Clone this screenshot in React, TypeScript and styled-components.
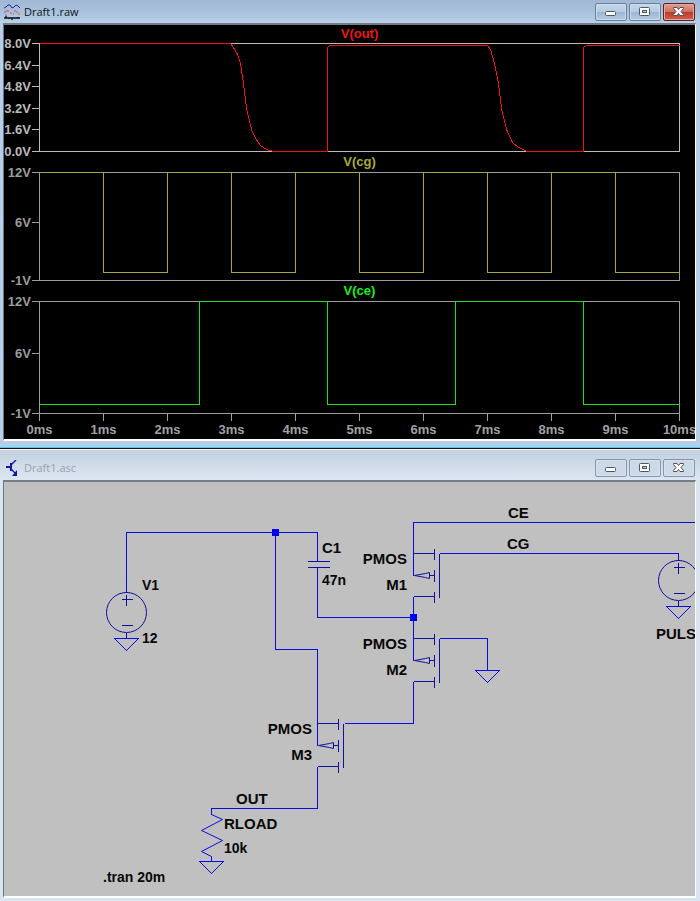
import React from "react";
import styled, { createGlobalStyle, css } from "styled-components";

const GlobalStyle = createGlobalStyle`
  * { box-sizing: border-box; }
  body { margin: 0; background: #dbe6f2; }
`;

const Desktop = styled.main`
  display: flex;
  flex-direction: column;
  min-height: 100vh;
`;

const WindowFrame = styled.section<{ $active: boolean }>`
  display: flex;
  flex-direction: column;
  padding: 0 4px ${(p) => (p.$active ? 6 : 3)}px 3px;
  ${(p) =>
    p.$active
      ? css`
          background: #b7cee8;
          border-bottom: 1px solid #45d0ea;
          box-shadow: 0 1px 0 #101418;
          margin-bottom: 1px;
        `
      : css`
          background: #d9e5f1;
          border-top: 1px solid #f4f8fc;
          flex: 1;
        `}
`;

const TitleBar = styled.header<{ $active: boolean }>`
  display: flex;
  align-items: center;
  gap: 4px;
  height: ${(p) => (p.$active ? 23 : 30)}px;
  padding-top: ${(p) => (p.$active ? 0 : 6)}px;
  margin: 0 -4px 0 -3px;
  padding-left: 4px;
  padding-right: 5px;
  background: ${(p) =>
    p.$active
      ? "linear-gradient(#a0b8d5, #a9c1dc 50%, #b9d2ea)"
      : "linear-gradient(#c2d0df, #cedbe8 45%, #dce6f1)"};
`;

const Title = styled.h1<{ $active: boolean }>`
  flex: 1;
  margin: 0;
  font: 400 11px/16px "Open Sans", "Noto Sans", sans-serif;
  color: ${(p) => (p.$active ? "#0c1420" : "#98a1ab")};
`;

const Controls = styled.div`
  display: flex;
  gap: 2px;
`;

const ControlButton = styled.button<{ $tone: "active" | "inactive" | "close" }>`
  display: flex;
  align-items: center;
  justify-content: center;
  width: 32px;
  height: 18px;
  padding: 0;
  border-radius: 2px;
  ${(p) =>
    p.$tone === "close"
      ? css`
          border: 1px solid #5b2029;
          background: linear-gradient(#dfa090, #d0705e 48%, #bb3b2a 52%, #cf6350);
          box-shadow: inset 0 0 0 1px #e2a99c;
        `
      : p.$tone === "active"
      ? css`
          border: 1px solid #6a7f99;
          background: linear-gradient(#c6d7ea, #b6cbe2 48%, #9db7d3 52%, #b2c9e2);
          box-shadow: inset 0 0 0 1px #c9dbee;
        `
      : css`
          border: 1px solid #8496ab;
          background: #ccd9e6;
          box-shadow: inset 0 0 0 1px #d6e1ed;
        `}
`;

const Pane = styled.div<{ $dark?: boolean }>`
  overflow: hidden;
  flex: 1;
  border: solid;
  border-width: 2px 1px 2px 1px;
  border-color: #747c85 #ffffff #ffffff #6d7680;
  background: ${(p) => (p.$dark ? "#000" : "#c0c0c0")};
`;

const ChartBlock = styled.div`
  display: grid;
  grid-template-columns: 35px 1fr;
  padding-right: 15px;
`;

const TraceName = styled.h2<{ $color: string; $first?: boolean }>`
  grid-column: 2;
  margin: 0;
  text-align: center;
  font: 700 13px/${(p) => (p.$first ? 18 : 20)}px "Liberation Sans", Arial, sans-serif;
  color: ${(p) => p.$color};
`;

const AxisSvg = styled.svg`
  display: block;
  overflow: visible;
  font: 700 13px "Liberation Sans", Arial, sans-serif;
`;

const PlotSvg = styled.svg`
  display: block;
  width: 100%;
  overflow: visible;
`;

const TimeScale = styled.div`
  display: flex;
  justify-content: space-between;
  height: 25px;
  margin: 0 15px 0 35px;
`;

const TimeMark = styled.span`
  display: flex;
  flex-direction: column;
  align-items: center;
  width: 1px;
  white-space: nowrap;
  font: 700 13px/16px "Liberation Sans", Arial, sans-serif;
  color: #a0a0a0;
  &::before {
    content: "";
    flex: none;
    width: 1px;
    height: 7px;
    margin-bottom: 1px;
    background: #a0a0a0;
  }
`;

type Tick = [string, number];
interface ChartProps {
  name: string;
  color: string;
  lineColor: string;
  axisColor: string;
  height: number;
  ticks: Tick[];
  path: string;
  first?: boolean;
}

function Chart({ name, color, lineColor, axisColor, height, ticks, path, first }: ChartProps) {
  const bottom = height - 1;
  return (
    <ChartBlock>
      <TraceName $color={color} $first={first}>{name}</TraceName>
      <AxisSvg width="35" height={height} fill={axisColor}>
        {ticks.map(([label, y]) => (
          <g key={label}>
            <text x="27" y={y + 5} textAnchor="end">{label}</text>
            <rect x="28" y={y} width="7" height="1" />
          </g>
        ))}
      </AxisSvg>
      <PlotSvg
        height={height}
        viewBox={`0 0 641 ${height}`}
        preserveAspectRatio="none"
        fill="none"
        shapeRendering="crispEdges"
      >
        <g transform="translate(.5 .5)">
          <path d={`M0 0H640V${bottom}H0Z`} stroke={axisColor} vectorEffect="non-scaling-stroke" />
          <path d={path} stroke={lineColor} vectorEffect="non-scaling-stroke" />
        </g>
      </PlotSvg>
    </ChartBlock>
  );
}

const charts: ChartProps[] = [
  {
    name: "V(out)",
    color: "#f01414",
    lineColor: "#f01018",
    axisColor: "#bababa",
    height: 109,
    first: true,
    ticks: [["8.0V", 0], ["6.4V", 22], ["4.8V", 43], ["3.2V", 65], ["1.6V", 86], ["0.0V", 108]],
    path:
      "M0 0H191L194 4L198 11L201 20L204 40L207 65L212 86L216 95L221 102L227 106L234 108H288V4L290 2H448L451 6L455 20L459 40L462 65L467 86L473 99L479 104L488 108H544V4L547 2H640",
  },
  {
    name: "V(cg)",
    color: "#acac2e",
    lineColor: "#a8a838",
    axisColor: "#9c9c9c",
    height: 109,
    ticks: [["12V", 0], ["6V", 50], ["-1V", 108]],
    path: "M0 0H64V100H128V0H192V100H256V0H320V100H384V0H448V100H512V0H576V100H640",
  },
  {
    name: "V(ce)",
    color: "#14f014",
    lineColor: "#20e020",
    axisColor: "#9c9c9c",
    height: 113,
    ticks: [["12V", 0], ["6V", 52], ["-1V", 112]],
    path: "M0 103H160V0H288V103H416V0H544V103H640",
  },
];

const WIRE = "#0a0ae6";
const SYMBOL = "#10109c";

const SchematicSvg = styled.svg`
  display: block;
  width: 100%;
  height: 414px;
`;

const PartText = styled.text<{ $small?: boolean }>`
  font: 700 ${(p) => (p.$small ? 14 : 15)}px "Liberation Sans", Arial, sans-serif;
  fill: #080808;
`;

const Ground = ({ x, y }: { x: number; y: number }) => (
  <path d={`M${x - 12} ${y}H${x + 12}L${x} ${y + 12}Z`} stroke={WIRE} />
);

const Junction = ({ x, y }: { x: number; y: number }) => (
  <rect x={x - 3.5} y={y - 3.5} width="7" height="7" fill="#0000ee" />
);

const VoltageSource = ({ x, y }: { x: number; y: number }) => (
  <g stroke={SYMBOL}>
    <circle cx={x} cy={y} r="20" shapeRendering="auto" />
    <path d={`M${x - 5} ${y - 13}h11M${x} ${y - 18}v11M${x - 5} ${y + 13}h11M${x} ${y + 20}v6`} />
    <Ground x={x} y={y + 26} />
  </g>
);

const Mosfet = ({ x, y }: { x: number; y: number }) => (
  <g transform={`translate(${x} ${y})`} stroke={SYMBOL}>
    <path d="M0 0H21M0 43H21M21 -5V6M21 16V28M21 38V49M26 0V44M16 22H21" />
    <path d="M1 22L12 20L16 19V25L12 24Z" shapeRendering="auto" />
  </g>
);

const labels: { t: string; x: number; y: number; end?: boolean; small?: boolean }[] = [
  { t: "CE", x: 504, y: 36 },
  { t: "CG", x: 503, y: 67 },
  { t: "C1", x: 318, y: 71 },
  { t: "47n", x: 318, y: 103, small: true },
  { t: "V1", x: 138, y: 108, small: true },
  { t: "12", x: 138, y: 161, small: true },
  { t: "PMOS", x: 403, y: 82, end: true },
  { t: "M1", x: 403, y: 108, end: true },
  { t: "PMOS", x: 403, y: 167, end: true },
  { t: "M2", x: 403, y: 193, end: true },
  { t: "PMOS", x: 308, y: 252, end: true },
  { t: "M3", x: 308, y: 278, end: true },
  { t: "OUT", x: 232, y: 322 },
  { t: "RLOAD", x: 220, y: 347 },
  { t: "10k", x: 220, y: 371, small: true },
  { t: ".tran 20m", x: 99, y: 400, small: true },
  { t: "PULS", x: 652, y: 157 },
];

function Schematic() {
  return (
    <SchematicSvg fill="none" shapeRendering="crispEdges" role="img" aria-label="Circuit schematic">
      <g transform="translate(.5 .5)">
        <path
          stroke={WIRE}
          d="M122 110V50H313V79M271 50V167H313V263M313 85V135H409M409 93V40H2000M435 71H674V78M409 114V178M435 156H483V188M409 199V241H340M313 284V326H207V332"
        />
        <path stroke={SYMBOL} d="M303 79H325M303 85H325" />
        <path
          stroke={WIRE}
          d="M207 332L218 337L197 348L218 358L197 369L207 374V379"
          shapeRendering="auto"
        />
        <VoltageSource x={122} y={130} />
        <VoltageSource x={674} y={98} />
        <Mosfet x={409} y={71} />
        <Mosfet x={409} y={156} />
        <Mosfet x={313} y={241} />
        <Ground x={483} y={188} />
        <Ground x={207} y={379} />
        <Junction x={271} y={50} />
        <Junction x={409} y={135} />
      </g>
      {labels.map((l) => (
        <PartText key={`${l.t}${l.y}`} x={l.x} y={l.y} $small={l.small} textAnchor={l.end ? "end" : "start"}>
          {l.t}
        </PartText>
      ))}
    </SchematicSvg>
  );
}

const WaveIcon = () => (
  <svg width="16" height="16" viewBox="0 0 16 16" fill="none" aria-hidden="true">
    <path d="M0 4L2 3L4 1L6 1L8 4L10 3L12 1L14 2L16 4" stroke="#28289c" />
    <path d="M0 8H2M2 7H5M6 9H8M10 7H12M12 8H14M14 10H16M1 11H3M9 10H10" stroke="#d84848" />
    <path d="M0 14H16M2 12V14M8 14V16M14 13V14M5 14V15" stroke="#101018" strokeWidth="1.400" />
  </svg>
);

const TransistorIcon = () => (
  <svg width="16" height="16" viewBox="0 0 16 16" fill="none" stroke="#1414a8" aria-hidden="true">
    <path d="M2 7H6" strokeWidth="2" />
    <path d="M7 3V11" strokeWidth="2" />
    <path d="M7 5L12 0M7 9L12 14" strokeWidth="1.400" />
    <path d="M13 10V16H8Z" fill="#1414a8" stroke="none" />
  </svg>
);

const MinGlyph = () => (
  <svg width="12" height="12" viewBox="0 0 12 12" aria-hidden="true">
    <rect x=".5" y="5.5" width="10" height="4" rx="1" fill="#fff" stroke="#4c5868" />
  </svg>
);

const MaxGlyph = () => (
  <svg width="12" height="12" viewBox="0 0 12 12" aria-hidden="true">
    <rect x=".5" y="1.5" width="10" height="8" rx="1" fill="#fff" stroke="#4c5868" />
    <rect x="3.5" y="4.5" width="4" height="2" fill="#b8cce2" stroke="#4c5868" />
  </svg>
);

const CloseGlyph = () => (
  <svg width="12" height="12" viewBox="0 0 12 12" aria-hidden="true">
    <path
      d="M.5 1.500H4L5.500 3.500L7 1.500H10.500V2.500L8 5.500L10.500 8.500V9.500H7L5.500 7.500L4 9.500H.5V8.500L3 5.500L.5 2.500Z"
      fill="#fff"
      stroke="#5a4a58"
    />
  </svg>
);

interface WindowProps {
  title: string;
  active: boolean;
  icon: React.ReactNode;
  dark?: boolean;
  children: React.ReactNode;
}

function Window({ title, active, icon, dark, children }: WindowProps) {
  const tone = active ? "active" : "inactive";
  return (
    <WindowFrame $active={active}>
      <TitleBar $active={active}>
        {icon}
        <Title $active={active}>{title}</Title>
        <Controls>
          <ControlButton $tone={tone} aria-label="Minimize"><MinGlyph /></ControlButton>
          <ControlButton $tone={tone} aria-label="Maximize"><MaxGlyph /></ControlButton>
          <ControlButton $tone={active ? "close" : "inactive"} aria-label="Close"><CloseGlyph /></ControlButton>
        </Controls>
      </TitleBar>
      <Pane $dark={dark}>{children}</Pane>
    </WindowFrame>
  );
}

export default function App() {
  return (
    <>
      <GlobalStyle />
      <Desktop>
        <Window title="Draft1.raw" active icon={<WaveIcon />} dark>
          {charts.map((c) => (
            <Chart key={c.name} {...c} />
          ))}
          <TimeScale>
            {Array.from({ length: 11 }, (_, i) => (
              <TimeMark key={i}>{i}ms</TimeMark>
            ))}
          </TimeScale>
        </Window>
        <Window title="Draft1.asc" active={false} icon={<TransistorIcon />}>
          <Schematic />
        </Window>
      </Desktop>
    </>
  );
}
